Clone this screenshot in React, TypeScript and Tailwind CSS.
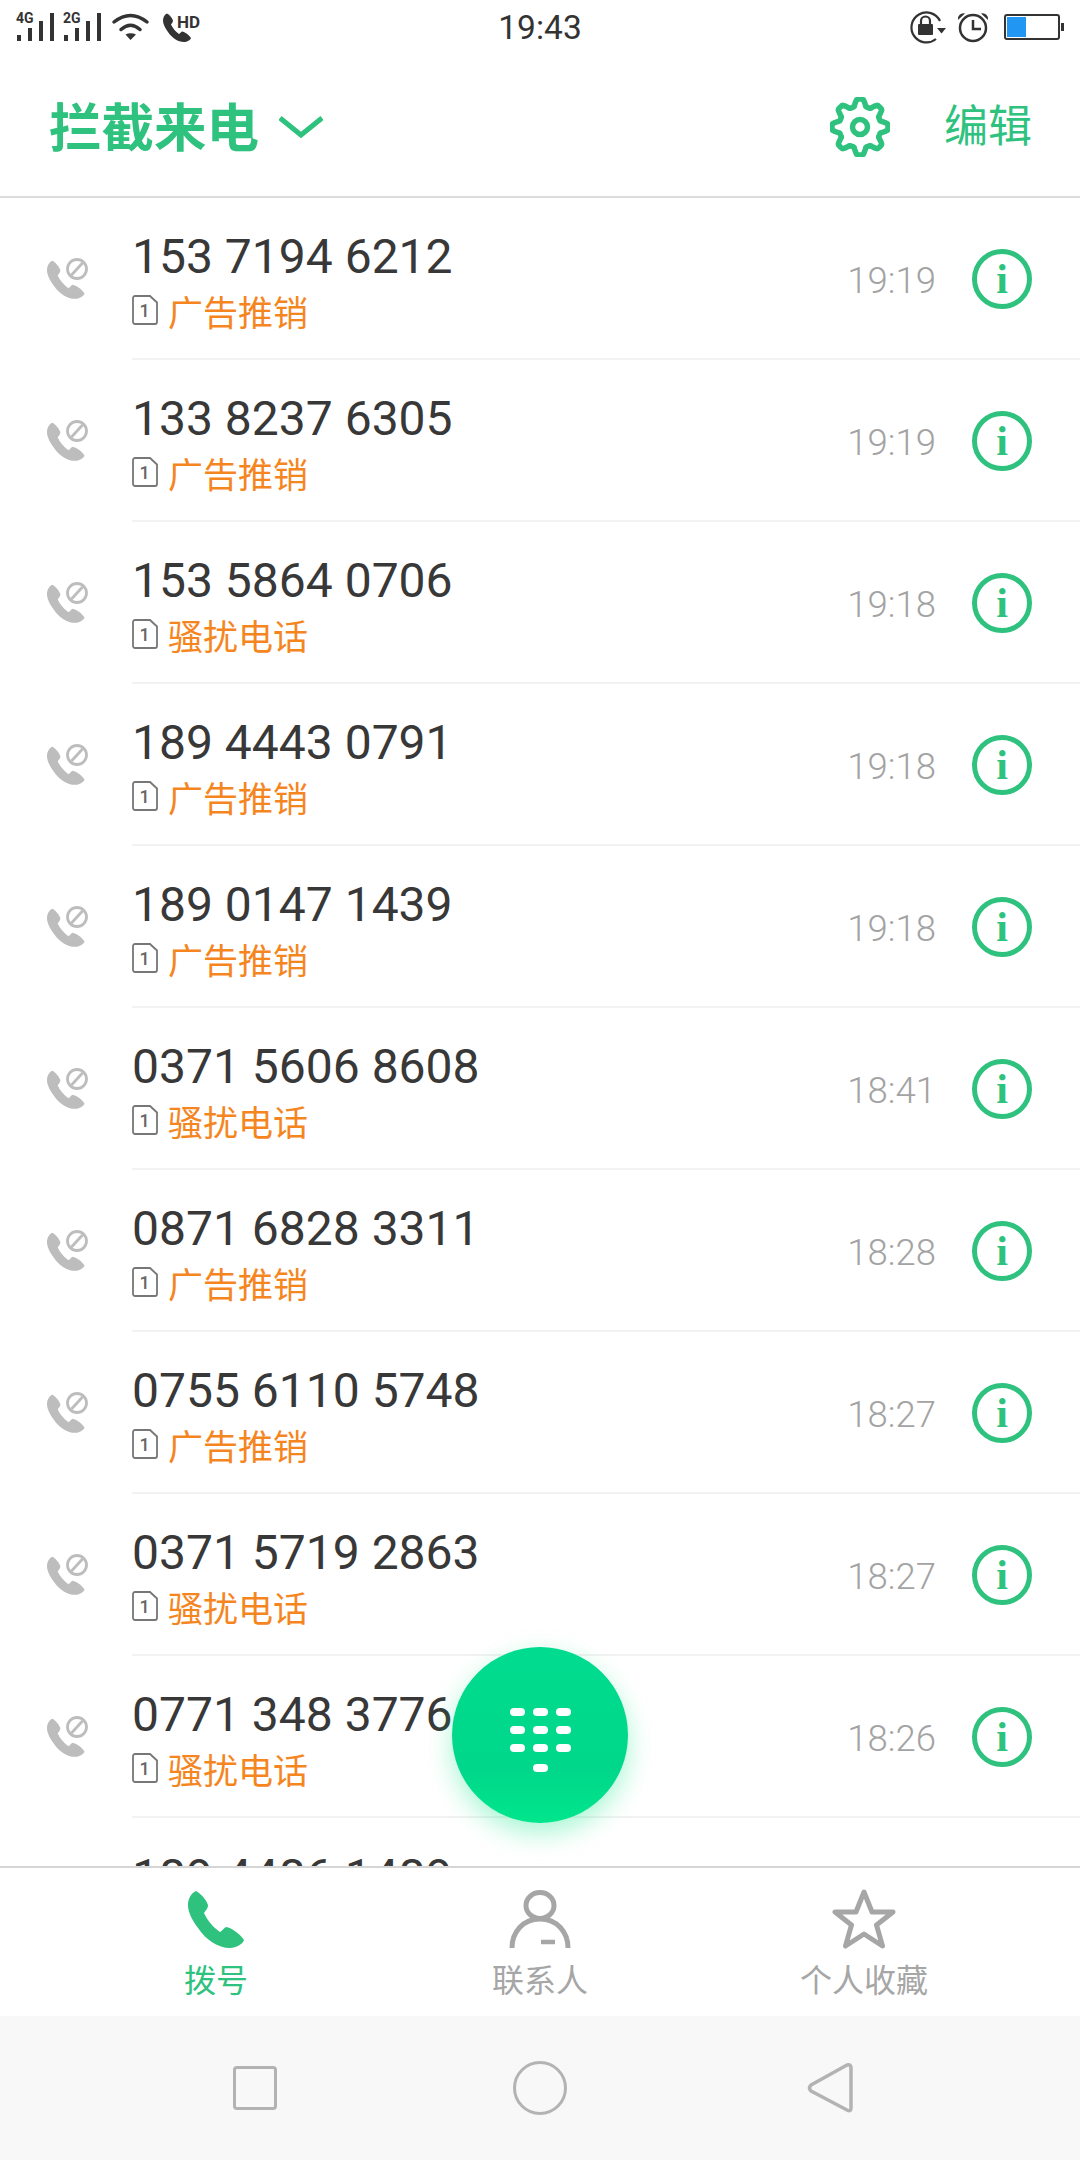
import React from 'react';

const green = '#2ec27e';

type Call = { number: string; tag: string; time: string };

const calls: Call[] = [
  { number: '153 7194 6212', tag: '广告推销', time: '19:19' },
  { number: '133 8237 6305', tag: '广告推销', time: '19:19' },
  { number: '153 5864 0706', tag: '骚扰电话', time: '19:18' },
  { number: '189 4443 0791', tag: '广告推销', time: '19:18' },
  { number: '189 0147 1439', tag: '广告推销', time: '19:18' },
  { number: '0371 5606 8608', tag: '骚扰电话', time: '18:41' },
  { number: '0871 6828 3311', tag: '广告推销', time: '18:28' },
  { number: '0755 6110 5748', tag: '广告推销', time: '18:27' },
  { number: '0371 5719 2863', tag: '骚扰电话', time: '18:27' },
  { number: '0771 348 3776', tag: '骚扰电话', time: '18:26' },
  { number: '189 4486 1489', tag: '广告推销', time: '18:26' },
];

// handset, drawn in a 57x59 box
const phonePath =
  'M8 1C12 3 18 9 20 15C20 19 17 21 16 23C19 30 25 37 32 42C34 41 36 38 38 37C44 38 52 44 56 50C55 54 48 58 42 58C30 58 18 50 10 38C4 30 0 22 0 15C0 9 3 3 8 1Z';

// wavy outline of the settings cog, 8 teeth
const cogPath = (() => {
  const pts: string[] = [];
  for (let i = 0; i < 160; i++) {
    const a = (i / 160) * Math.PI * 2;
    const wave = Math.max(-1, Math.min(1, 1.5 * Math.cos(8 * a)));
    const r = 24.5 + 3.5 * wave;
    pts.push(`${(30 + r * Math.sin(a)).toFixed(2)} ${(30 - r * Math.cos(a)).toFixed(2)}`);
  }
  return `M${pts.join('L')}Z`;
})();

function SignalBars({ label, x }: { label: string; x: number }) {
  return (
    <g transform={`translate(${x} 0)`}>
      <text x="0" y="23" fontSize="14" fontWeight="700" fontFamily="Roboto, sans-serif" fill="#333">
        {label}
      </text>
      <rect x="1" y="35" width="4" height="6" fill="#333" />
      <rect x="12" y="28" width="4" height="13" fill="#333" />
      <rect x="23" y="21" width="4" height="20" fill="#333" />
      <rect x="34" y="13" width="4" height="28" fill="#333" />
    </g>
  );
}

function StatusLeft() {
  return (
    <svg width="220" height="50" viewBox="0 0 220 50" className="absolute left-0 top-0">
      <SignalBars label="4G" x={16} />
      <SignalBars label="2G" x={63} />
      <g fill="none" stroke="#333" strokeWidth="3.500" strokeLinecap="round">
        <path d="M114 22Q130.500 9 147 22" />
        <path d="M121 29.500Q130.500 21 140 29.500" />
      </g>
      <path d="M125.500 34.500Q130.500 32 136 34.500L130.500 40z" fill="#333" />
      <g transform="translate(163 13) scale(.5)">
        <path d={phonePath} fill="#333" />
      </g>
      <text x="177" y="28" fontSize="17" fontWeight="700" fontFamily="Roboto, sans-serif" fill="#333">
        HD
      </text>
    </svg>
  );
}

function StatusRight() {
  return (
    <svg width="170" height="50" viewBox="0 0 170 50" className="absolute left-[900px] top-0">
      <path d="M40 21A15 15 0 1 0 36 39" fill="none" stroke="#333" strokeWidth="2.200" />
      <path d="M37 28h9l-4.500 5.500z" fill="#333" />
      <rect x="18" y="24" width="15" height="11" rx="1" fill="#333" />
      <path d="M21 24v-3a4.500 4.500 0 0 1 9 0v3" fill="none" stroke="#333" strokeWidth="2.200" />
      <circle cx="73" cy="28" r="13" fill="none" stroke="#333" strokeWidth="2.500" />
      <path d="M73 20v9h8" fill="none" stroke="#333" strokeWidth="2.500" />
      <path d="M58 20a5.500 5.500 0 0 1 7-6.500zM88 20a5.500 5.500 0 0 0-7-6.500z" fill="#333" />
      <rect x="105" y="15" width="54" height="24" rx="2" fill="#fff" stroke="#333" strokeWidth="2" />
      <rect x="107" y="17" width="19" height="20" fill="#2196f3" />
      <rect x="161" y="23" width="3" height="8" fill="#333" />
    </svg>
  );
}

function BlockedCallIcon() {
  return (
    <svg width="42" height="42" viewBox="0 0 42 42" className="shrink-0">
      <g transform="translate(1 2) scale(.67)">
        <path d={phonePath} fill="#bdbdbd" />
      </g>
      <circle cx="31" cy="11" r="9.500" fill="#fff" stroke="#bdbdbd" strokeWidth="2.800" />
      <path d="M25.500 17l11-12" stroke="#bdbdbd" strokeWidth="2.800" />
    </svg>
  );
}

function SimIcon() {
  return (
    <svg width="26" height="30" viewBox="0 0 26 30" className="shrink-0 mt-[-8px]">
      <path
        d="M3 1h15l7 6.500V27a2 2 0 0 1-2 2H3a2 2 0 0 1-2-2V3a2 2 0 0 1 2-2z"
        fill="none"
        stroke="#777"
        strokeWidth="1.800"
      />
      <text x="12.500" y="22" textAnchor="middle" fontSize="18" fontWeight="500" fontFamily="Roboto, sans-serif" fill="#666">
        1
      </text>
    </svg>
  );
}

function InfoIcon() {
  return (
    <div className="w-[60px] h-[60px] rounded-full border-[5px] border-[#2ec27e] flex items-center justify-center">
      <span className="text-[#2ec27e] text-[42px] font-bold leading-none font-['Liberation_Serif',serif]">i</span>
    </div>
  );
}

function CallRow({ call }: { call: Call }) {
  return (
    <div className="flex h-[162px] shrink-0">
      <div className="w-[132px] shrink-0 flex items-center pl-[46px]">
        <BlockedCallIcon />
      </div>
      <div className="flex-1 flex items-center border-b-2 border-[#f2f2f2]">
        <div className="flex-1 pt-[6px]">
          <div className="text-[48px] leading-[58px] text-[#383838] font-['Roboto',sans-serif]">{call.number}</div>
          <div className="flex items-center gap-[10px] h-[40px] mt-[8px]">
            <SimIcon />
            <span className="text-[35px] leading-[40px] text-[#f5861f] mt-[2px]">{call.tag}</span>
          </div>
        </div>
        <span className="text-[36.500px] mt-[6px] text-[#a3a3a3] font-light font-['Roboto',sans-serif] mr-[36px]">{call.time}</span>
        <div className="mr-[48px] mt-[2px]">
          <InfoIcon />
        </div>
      </div>
    </div>
  );
}

function DialFab() {
  const keys = [0, 1, 2, 3, 4, 5, 6, 7, 8];
  return (
    <div className="absolute left-[452px] top-[1647px] w-[176px] h-[176px] rounded-full bg-[linear-gradient(180deg,#00dc8f,#00d78a_70%,#00e68c)] shadow-[0_10px_26px_rgba(0,230,130,0.35)] flex flex-col items-center justify-center">
      <div className="grid grid-cols-3 gap-x-[8px] gap-y-[10px] w-[61px] mt-[10px]">
        {keys.map(k => (
          <span key={k} className="w-[15px] h-[8px] rounded-full bg-white" />
        ))}
      </div>
      <span className="w-[15px] h-[8px] rounded-full bg-white mt-[12px]" />
    </div>
  );
}

function TabItem({ label, active, children }: { label: string; active?: boolean; children: React.ReactNode }) {
  return (
    <div className="flex-1 flex flex-col items-center pt-[21px]">
      <div className="h-[60px] flex items-center">{children}</div>
      <span className={`mt-[10px] text-[32px] leading-[44px] ${active ? 'text-[#2ec27e]' : 'text-[#a6a6a6]'}`}>{label}</span>
    </div>
  );
}

export default function App() {
  return (
    <div className="relative w-[1080px] h-[2160px] bg-white flex flex-col overflow-hidden font-['Roboto','Noto_Sans_CJK_SC',sans-serif]">
      {/* status bar */}
      <div className="h-[58px] shrink-0 flex justify-center pt-[8px]">
        <span className="text-[33.500px] leading-[40px] text-[#333]">19:43</span>
      </div>
      <StatusLeft />
      <StatusRight />

      {/* header */}
      <div className="h-[140px] shrink-0 flex items-center border-b-2 border-[#dcdcdc] pl-[49px] pr-[48px]">
        <span className="text-[52.500px] font-bold leading-none text-[#2ec27e] mt-[5px]">拦截来电</span>
        <svg width="44" height="26" viewBox="0 0 44 26" className="ml-[20px] mt-[2px]" fill="none" stroke={green} strokeWidth="5">
          <path d="M1 3l21 17L43 3" />
        </svg>
        <svg width="60" height="60" viewBox="0 0 60 60" className="ml-auto mt-[-1px]" fill="none" stroke={green} strokeWidth="5.500" strokeLinejoin="round">
          <path d={cogPath} />
          <circle cx="30" cy="30" r="7.500" />
        </svg>
        <span className="ml-[54px] text-[44px] leading-none text-[#2ec27e]">编辑</span>
      </div>

      {/* call list */}
      <div className="flex-1 min-h-0 overflow-hidden">
        {calls.map((call, i) => (
          <CallRow key={i} call={call} />
        ))}
      </div>

      <DialFab />

      {/* bottom tabs */}
      <div className="h-[150px] shrink-0 flex bg-white border-t-2 border-[#d6d6d6] px-[54px]">
        <TabItem label="拨号" active>
          <svg width="57" height="59" viewBox="0 0 57 59">
            <path d={phonePath} fill={green} />
          </svg>
        </TabItem>
        <TabItem label="联系人">
          <svg width="62" height="58" viewBox="0 0 62 58" fill="none" stroke="#a6a6a6" strokeWidth="5">
            <ellipse cx="31" cy="15.500" rx="14" ry="13" />
            <path d="M3 58c0-16 11-29 28-29s28 13 28 29" />
            <path d="M32 52h14" strokeWidth="4.500" />
          </svg>
        </TabItem>
        <TabItem label="个人收藏">
          <svg width="64" height="60" viewBox="0 0 64 60" fill="none" stroke="#a6a6a6" strokeWidth="5" strokeLinejoin="round">
            <path d="M32 3l8 20h21L44.500 36l6 21L32 45 13.500 57l6-21L3 23h21z" />
          </svg>
        </TabItem>
      </div>

      {/* nav bar */}
      <div className="h-[144px] shrink-0 bg-[#f8f8f8] flex items-center justify-between pl-[233px] pr-[227px]">
        <div className="w-[44px] h-[44px] rounded-[4px] border-[3px] border-[#b3b3b3]" />
        <div className="w-[54px] h-[54px] rounded-full border-[3px] border-[#b3b3b3] mr-[4px]" />
        <svg width="46" height="52" viewBox="0 0 46 52" fill="none" stroke="#b3b3b3" strokeWidth="3.500" strokeLinejoin="round">
          <path d="M40 3Q44 2 44 6V46Q44 50 40 48L4 29Q1 26 4 23z" />
        </svg>
      </div>
    </div>
  );
}
